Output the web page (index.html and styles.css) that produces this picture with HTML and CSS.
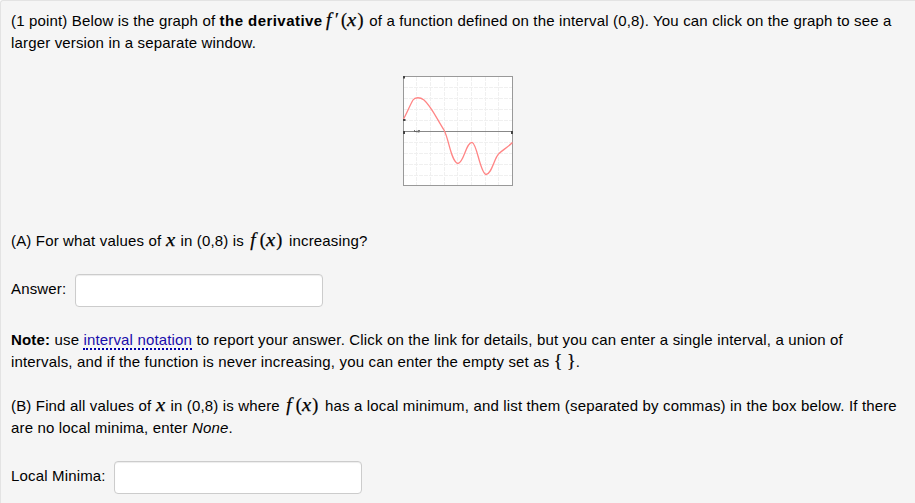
FILE: index.html
```html
<!DOCTYPE html>
<html lang="en">
<head>
<meta charset="utf-8">
<title>Derivative graph problem</title>
<link rel="stylesheet" href="styles.css">
</head>
<body>
<main class="problem">
<p class="intro">(1 point) Below is the graph of <b class="term">the derivative</b> <span class="math prime"><i class="f">f</i><span class="tick">′</span><span class="paren">(</span><i class="x">x</i><span class="paren">)</span></span> of a function defined on the interval (0,8). You can click on the graph to see a<br>larger version in a separate window.</p>
<div class="figure">
<svg class="graph" width="110" height="110" viewBox="0 0 110 110">
<rect x=".5" y=".5" width="109" height="109" fill="#fff"/>
<path d="M13.5 1v108M27.5 1v108M41.5 1v108M54.5 1v108M68.5 1v108M82.5 1v108M95.5 1v108M1 11.5h108M1 22.5h108M1 33.5h108M1 44.5h108M1 66.5h108M1 77.5h108M1 88.5h108M1 99.5h108" stroke="#f0f0f0" stroke-dasharray="4 1" fill="none"/>
<path d="M1 55.500h108" stroke="#888"/>
<rect x=".5" y=".5" width="109" height="109" fill="none" stroke="#999"/>
<path d="M.5 43C4 37 7 29 10 24C12 21 17 21 21 24C28 30 34 43 41 54C46 63 48 86 55 87.500C61 87 63 66 69 66.300C74 67 77 97 83 98.500C89 98 91 82 96 77.500C99 74.500 105 71 109.500 66.500" fill="none" stroke="#ff8585" stroke-width="1.300"/>
<path d="M0 0h2v2.500H0zM0 43h2.500v2H0zM0 55h2v3H0zM108 55h2v3h-2z" fill="#444"/>
<path d="M11.500 54v1.500h2M14 54.500v2M15 54.500h2M15 56h1.500" stroke="#555" stroke-width=".8" fill="none"/>
</svg>
</div>
<p class="part-a">(A) For what values of <span class="math single"><i class="x">x</i></span> in (0,8) is <span class="math"><i class="f">f</i><span class="paren">(</span><i class="x">x</i><span class="paren">)</span></span> increasing?</p>
<div class="answer"><label for="a">Answer:</label><input id="a" class="box" type="text"></div>
<p class="note"><b>Note:</b> use <a class="link">interval notation</a> to report your answer. Click on the link for details, but you can enter a single interval, a union of<br>intervals, and if the function is never increasing, you can enter the empty set as <span class="math braces"><span>{</span><span>}</span></span>.</p>
<p class="part-b">(B) Find all values of <span class="math single"><i class="x">x</i></span> in (0,8) is where <span class="math"><i class="f">f</i><span class="paren">(</span><i class="x">x</i><span class="paren">)</span></span> has a local minimum, and list them (separated by commas) in the box below. If there<br>are no local minima, enter <i>None</i>.</p>
<div class="answer minima"><label for="b">Local Minima:</label><input id="b" class="box" type="text"></div>
</main>
</body>
</html>
```
FILE: styles.css
```css
* { box-sizing: border-box; }
body { margin: 0; overflow: hidden; }
.problem {
  height: 503px;
  padding: 9px 0 0 10px;
  background: #f5f5f5;
  border: 1px solid #e3e3e3;
  border-width: 1px 0 0 1px;
  border-top-left-radius: 3px;
  font: 15px/22px "Liberation Sans", Arial, sans-serif;
  letter-spacing: .16px;
  color: #000;
  white-space: nowrap;
}
p { margin: 0; }
.term { letter-spacing: .45px; }
.figure { height: 110px; margin: 22px 0 44px 392px; }
.graph { display: block; }
.math {
  display: inline-flex;
  align-items: baseline;
  width: 36.5px;
  vertical-align: baseline;
  font-family: "Liberation Serif", serif;
  font-size: 18px;
  line-height: 14px;
  letter-spacing: 0;
  -webkit-text-stroke: .25px #000;
}
.math > * { flex: none; }
.f { width: 11.5px; padding-left: 2px; font-size: 19px; }
.paren { width: 6px; }
.x { width: 10.5px; font-size: 18px; transform: scaleX(1.15); transform-origin: left; }
.prime { width: 38px; }
.prime .f { width: 8px; padding-left: 0; margin-left: -1px; }
.tick { width: 7px; padding-left: 1px; }
.single { width: 10.5px; }
.braces { width: 22px; justify-content: space-between; }
.answer { display: flex; align-items: center; gap: 9px; height: 33px; }
.minima { gap: 8px; }
.answer label { padding-bottom: 3px; }
.box {
  width: 248px;
  height: 33px;
  padding: 0 6px;
  border: 1px solid #ccc;
  border-radius: 4px;
  background: #fff;
  box-shadow: inset 0 1px 1px rgba(0,0,0,.075);
}
.part-a { margin-bottom: 22px; }
.note { margin-top: 22px; }
.part-b { margin: 22px 0; }
.link { color: #1a0dab; border-bottom: 2px dotted #00a; }
```
